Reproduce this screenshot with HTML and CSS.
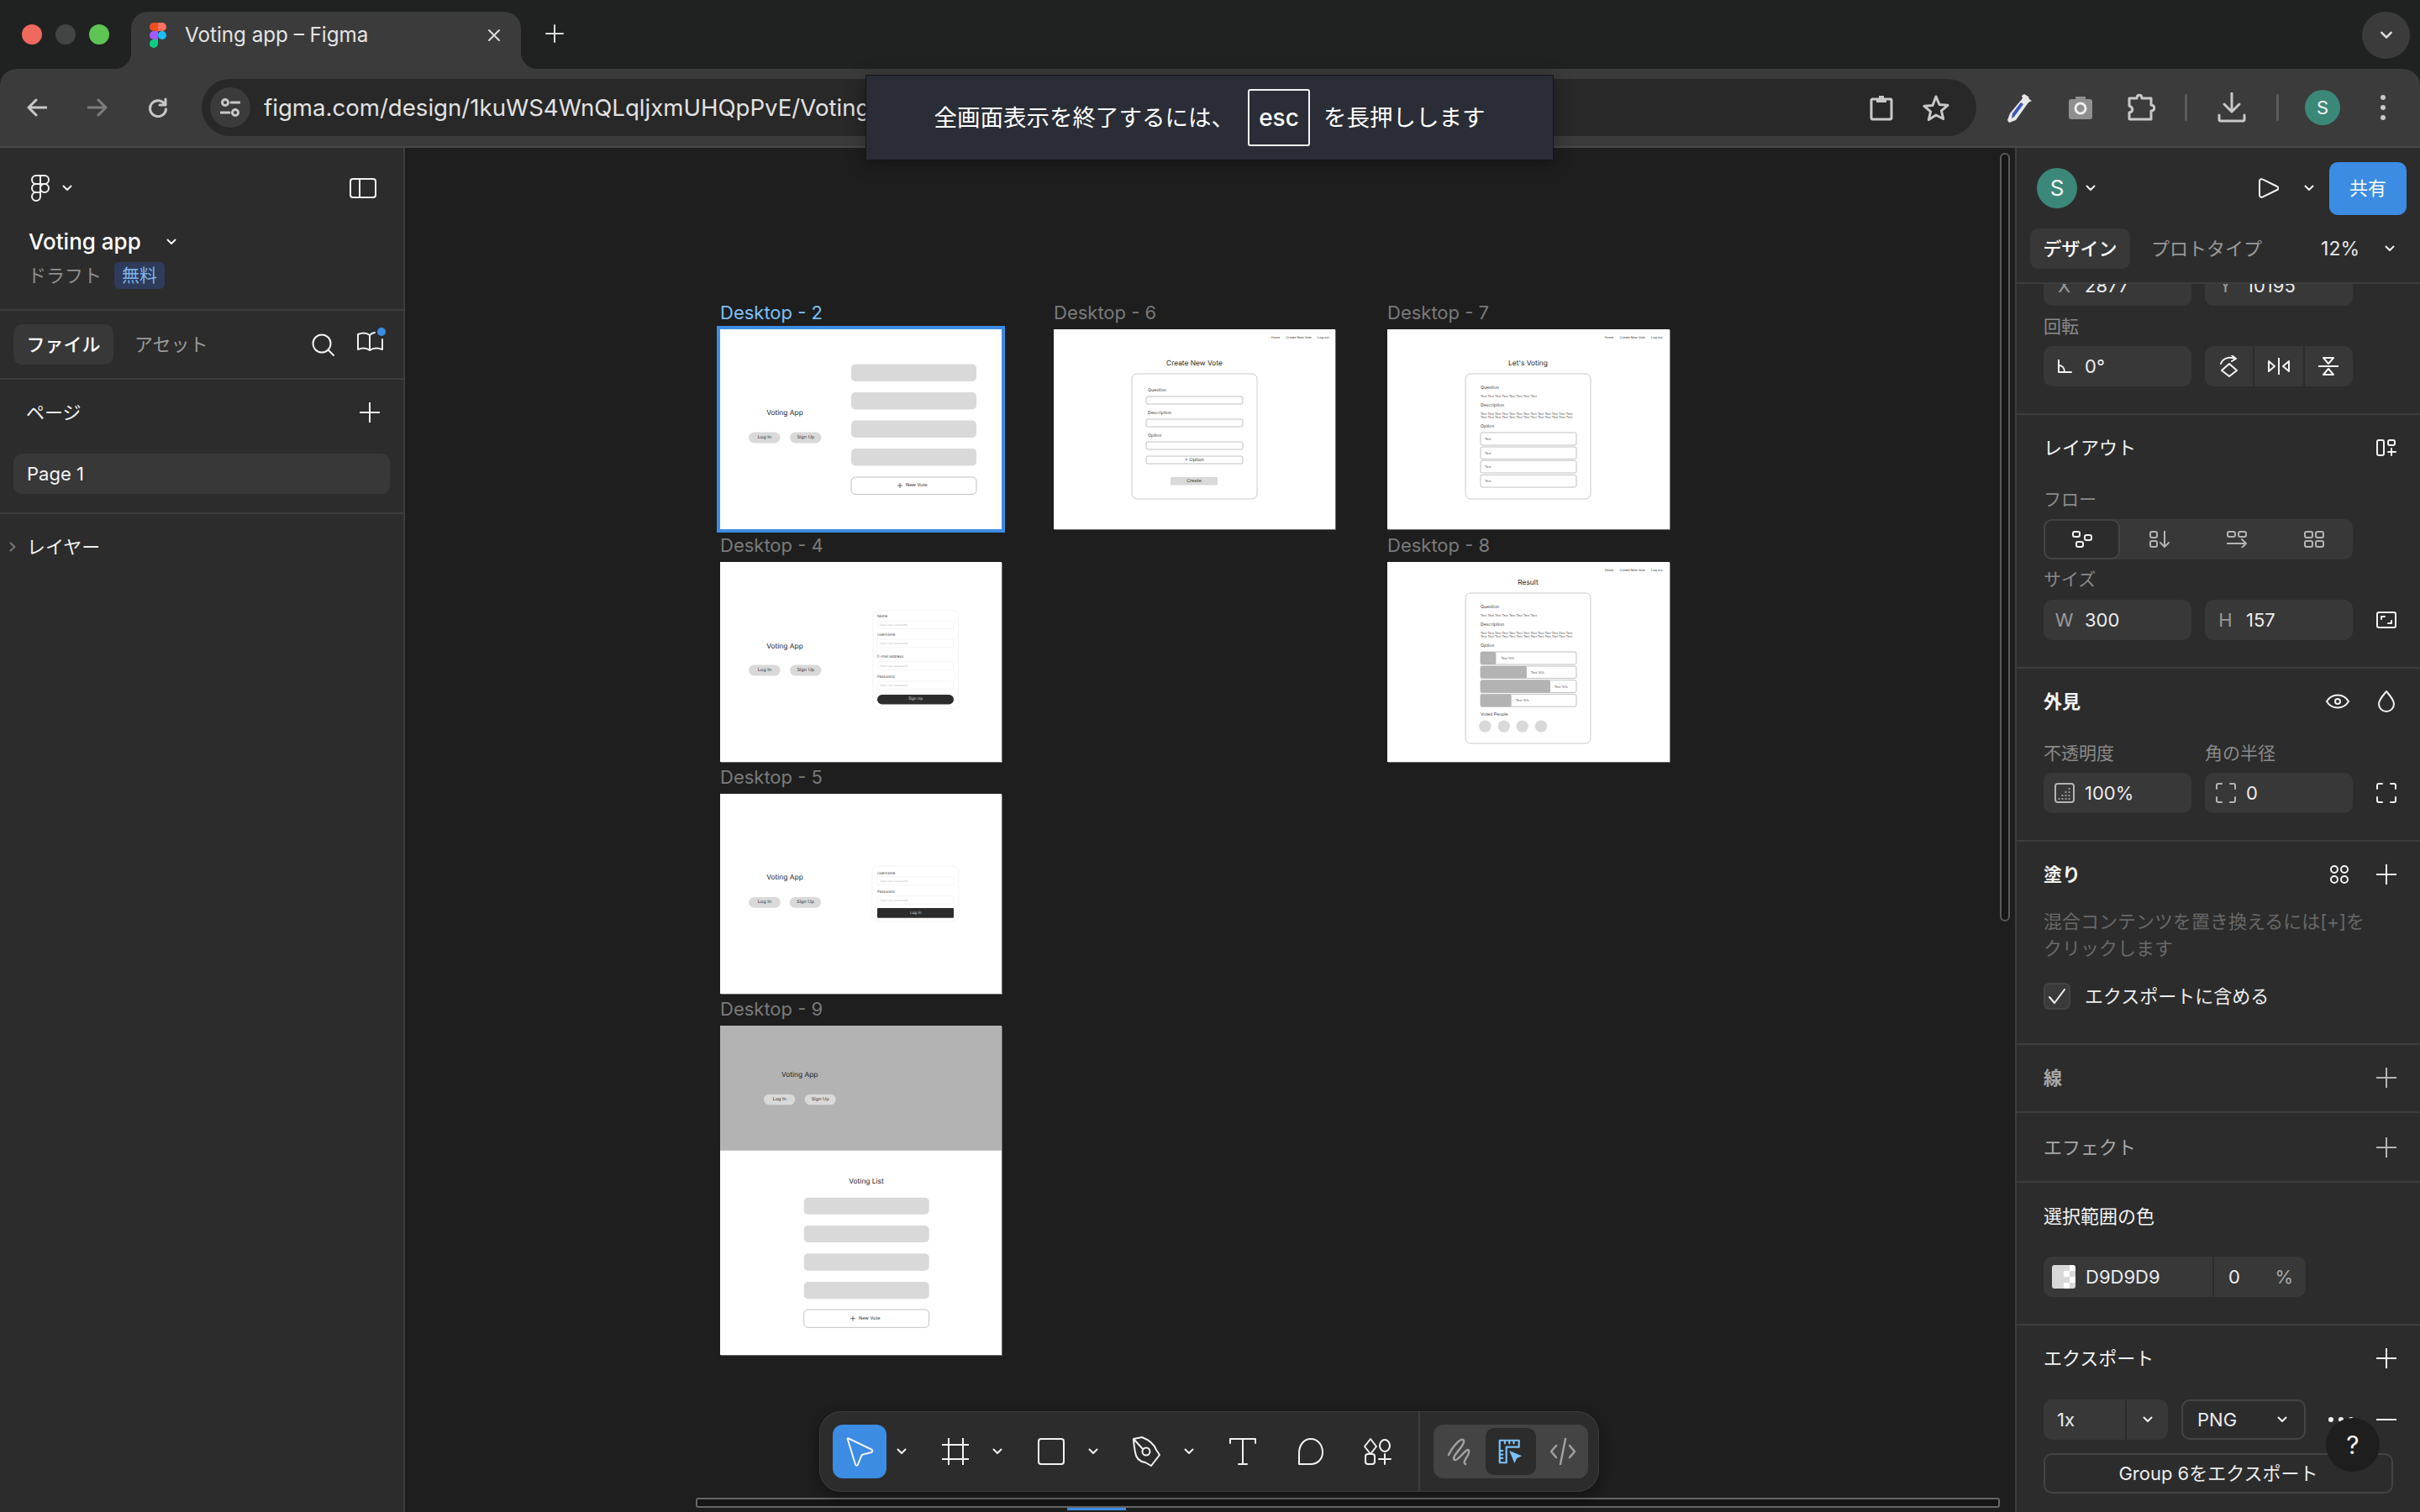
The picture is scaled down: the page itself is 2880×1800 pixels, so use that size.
FILE: index.html
```html
<!DOCTYPE html>
<html lang="ja">
<head>
<meta charset="utf-8">
<title>Voting app – Figma</title>
<link rel="stylesheet" href="styles.css">
</head>
<body>
<svg class="sprite" width="0" height="0">
  <symbol id="chev" viewBox="0 0 12 8"><path d="M1.5 1.5 6 6l4.500-4.500"/></symbol>
  <symbol id="plus" viewBox="0 0 24 24"><path d="M12 0v24M0 12h24"/></symbol>
</svg>

<header class="tabstrip">
  <div class="lights"><span class="dot dot-r"></span><span class="dot dot-g"></span><span class="dot dot-y"></span></div>
  <div class="tab">
    <svg class="logo-color" width="20" height="30" viewBox="0 0 20 30"><path fill="#f24e1e" d="M10 0H5a5 5 0 0 0 0 10h5z"/><path fill="#ff7262" d="M10 0h5a5 5 0 0 1 0 10h-5z"/><path fill="#a259ff" d="M10 10H5a5 5 0 0 0 0 10h5z"/><circle fill="#1abcfe" cx="15" cy="15" r="5"/><path fill="#0acf83" d="M5 20a5 5 0 1 0 5 5v-5z"/></svg>
    <span class="tab-title">Voting app – Figma</span>
    <svg class="i i-light" width="24" height="24" viewBox="0 0 24 24"><path d="M6 6l12 12M18 6 6 18"/></svg>
  </div>
  <svg class="i i-light newtab" width="24" height="24" viewBox="0 0 24 24"><path d="M12 2v20M2 12h20"/></svg>
  <div class="tabmenu"><svg class="i i-light" width="16" height="10"><use href="#chev"/></svg></div>
</header>

<nav class="toolbar">
  <svg class="i i-chrome" width="24" height="24" viewBox="0 0 24 24"><path d="M23 12H2M11 3l-9 9 9 9"/></svg>
  <svg class="i i-chrome-dim navbtn" width="24" height="24" viewBox="0 0 24 24"><path d="M1 12h21M13 3l9 9-9 9"/></svg>
  <svg class="i i-chrome navbtn" width="24" height="24" viewBox="0 0 24 24"><path d="M20 8a9.500 9.500 0 1 0 1.500 6M21 2v7h-7"/></svg>
  <div class="omni">
    <span class="siteinfo"><svg class="i i-chrome" width="24" height="24" viewBox="0 0 24 24"><circle cx="6" cy="6" r="3.500"/><path d="M13 6h10M1 18h10"/><circle cx="18" cy="18" r="3.500"/></svg></span>
    <span class="url">figma.com/design/1kuWS4WnQLqljxmUHQpPvE/Voting</span>
    <svg class="i i-chrome omni-ic" width="28" height="32" viewBox="0 0 28 32"><path d="M3 6h22a1.500 1.500 0 0 1 1 1v21a2 2 0 0 1-2 2H4a2 2 0 0 1-2-2V7z"/><path class="solid" d="M8 6h12v4H8zM11 2h6v4h-6z"/></svg>
    <svg class="i i-chrome omni-ic" width="32" height="32" viewBox="0 0 32 32"><path d="m16 3 4 9.500 10 .8-7.600 6.500 2.300 9.700L16 25l-8.700 5.500 2.300-9.700L2 14.300l10-.8z"/></svg>
  </div>
  <div class="actions">
    <svg class="i-cell" width="34" height="36" viewBox="0 0 34 36"><path fill="#e8e8e8" d="m23 2 5 3 1 3 3 2-4 2-15 21-8 3-2-3 3-8L21 7l-1-3z"/><path fill="#3a55b8" d="M9 25 19 12l3 2-11 15-3 2z"/></svg>
    <svg class="i-cell" width="30" height="30" viewBox="0 0 30 30"><path fill="#8f8f8f" d="M9 5V2h12v3h5a3 3 0 0 1 3 3v18a3 3 0 0 1-3 3H4a3 3 0 0 1-3-3V8a3 3 0 0 1 3-3z"/><circle cx="15" cy="16" r="6" fill="none" stroke="#eee" stroke-width="3"/></svg>
    <svg class="i i-chrome i-cell" width="34" height="34" viewBox="0 0 34 34"><path d="M3 6h9c0-5 6-5 6 0h11v8c5 0 5 7 0 7v10H4a1 1 0 0 1-1-1v-7c5-1 5-6 0-8z"/></svg>
    <span class="tdiv"></span>
    <svg class="i i-chrome i-cell" width="34" height="36" viewBox="0 0 34 36"><path d="M17 1v22M8 14l9 9 9-9M2 27v5a2 2 0 0 0 2 2h26a2 2 0 0 0 2-2v-5"/></svg>
    <span class="tdiv"></span>
    <span class="avatar avatar-sm i-cell">S</span>
    <svg class="i-cell dots" width="6" height="30" viewBox="0 0 6 30"><circle cx="3" cy="3" r="3"/><circle cx="3" cy="15" r="3"/><circle cx="3" cy="27" r="3"/></svg>
  </div>
</nav>

<main class="workspace">
  <aside class="left">
    <section class="lf-top">
      <div class="lf-brand">
        <svg class="i i-white" width="22" height="32" viewBox="0 0 22 32"><path d="M11 1H6a5 5 0 0 0 0 10h5zM11 1h5a5 5 0 0 1 0 10h-5zM11 11H6a5 5 0 0 0 0 10h5z"/><circle cx="16" cy="16" r="5"/><path d="M6 21a5 5 0 1 0 5 5v-5z"/></svg>
        <svg class="i i-white" width="12" height="8"><use href="#chev"/></svg>
        <svg class="i i-white push" width="32" height="24" viewBox="0 0 32 24"><rect x="1" y="1" width="30" height="22" rx="3"/><path d="M12 1v22"/></svg>
      </div>
      <div class="lf-name"><span>Voting app</span><svg class="i i-white" width="12" height="8"><use href="#chev"/></svg></div>
      <div class="lf-draft"><span>ドラフト</span><span class="badge">無料</span></div>
    </section>
    <section class="lf-tabs">
      <span class="pilltab on">ファイル</span>
      <span class="pilltab">アセット</span>
      <svg class="i i-white push" width="27" height="27" viewBox="0 0 27 27"><circle cx="12" cy="12" r="10.500"/><path d="m19.500 19.500 6.500 6.500"/></svg>
      <svg class="book" width="34" height="30" viewBox="0 0 34 30"><g class="i i-white"><path d="M1 8c5-2 10-2 14 1v18c-4-3-9-3-14-1zM15 9c2-2 4-3 6-3M30 14v12c-5-2-11-2-15 1"/></g><circle cx="29" cy="5" r="5" fill="#3c8ce3"/></svg>
    </section>
    <section class="lf-pages">
      <div class="lf-head"><span>ページ</span><svg class="i i-white" width="24" height="24"><use href="#plus"/></svg></div>
      <div class="page-row">Page 1</div>
    </section>
    <section class="lf-layers">
      <svg class="i i-mute" width="8" height="12" viewBox="0 0 8 12"><path d="m1.500 1.500 5 4.500-5 4.500"/></svg>
      <span>レイヤー</span>
    </section>
  </aside>

  <div class="canvas">
    <!-- Desktop 2 -->
    <div class="fr fr-c1 fr-r1">
      <div class="fr-label sel">Desktop - 2</div>
      <svg class="mini mini-sel" width="335" height="238" viewBox="0 0 335 238">
        <text class="m-title" x="77" y="100">Voting App</text>
        <rect class="m-pill" x="34" y="122.500" width="37.500" height="13" rx="6.500"/><text class="m-btn" x="52.800" y="129">Log In</text>
        <rect class="m-pill" x="83" y="122.500" width="37.500" height="13" rx="6.500"/><text class="m-btn" x="101.800" y="129">Sign Up</text>
        <rect class="m-pill" x="156" y="41.500" width="149" height="20.500" rx="5"/>
        <rect class="m-pill" x="156" y="75" width="149" height="20.500" rx="5"/>
        <rect class="m-pill" x="156" y="108.500" width="149" height="20.500" rx="5"/>
        <rect class="m-pill" x="156" y="142" width="149" height="20.500" rx="5"/>
        <rect class="m-box" x="156" y="176" width="149" height="20.500" rx="5"/>
        <path class="m-plus" d="M214 183v6M211 186h6"/><text class="m-btn m-left" x="221" y="186">New Vote</text>
      </svg>
    </div>
    <!-- Desktop 4 -->
    <div class="fr fr-c1 fr-r2">
      <div class="fr-label">Desktop - 4</div>
      <svg class="mini" width="335" height="238" viewBox="0 0 335 238">
        <text class="m-title" x="77" y="100.500">Voting App</text>
        <rect class="m-pill" x="34" y="122.500" width="37.500" height="13" rx="6.500"/><text class="m-btn" x="52.800" y="129">Log In</text>
        <rect class="m-pill" x="83" y="122.500" width="37.500" height="13" rx="6.500"/><text class="m-btn" x="101.800" y="129">Sign Up</text>
        <rect class="m-soft" x="182" y="57.500" width="101.500" height="117.500" rx="6"/>
        <text class="m-tiny" x="187" y="65.500">Name</text>
        <rect class="m-soft" x="187" y="70.500" width="91" height="9" rx="1"/><text class="m-ph" x="190" y="75">Input your username</text>
        <text class="m-tiny" x="187" y="87.800">Username</text>
        <rect class="m-soft" x="187" y="92" width="91" height="10" rx="1"/><text class="m-ph" x="190" y="97">Input your password</text>
        <text class="m-tiny" x="187" y="113.700">E-mail address</text>
        <rect class="m-soft" x="187" y="118.500" width="91" height="10" rx="4"/><text class="m-ph" x="190" y="123.500">Input your password</text>
        <text class="m-tiny" x="187" y="137">Password</text>
        <rect class="m-soft" x="187" y="142" width="91" height="10" rx="4"/><text class="m-ph" x="190" y="147">Input your password</text>
        <rect class="m-dark" x="187" y="158" width="91" height="11.500" rx="5.700"/><text class="m-onDark" x="232.500" y="163.700">Sign Up</text>
      </svg>
    </div>
    <!-- Desktop 5 -->
    <div class="fr fr-c1 fr-r3">
      <div class="fr-label">Desktop - 5</div>
      <svg class="mini" width="335" height="238" viewBox="0 0 335 238">
        <text class="m-title" x="77" y="100">Voting App</text>
        <rect class="m-pill" x="34.300" y="123" width="37.400" height="12.700" rx="6.300"/><text class="m-btn" x="52.800" y="129.300">Log In</text>
        <rect class="m-pill" x="82.700" y="123" width="37.300" height="12.700" rx="6.300"/><text class="m-btn" x="101.500" y="129.300">Sign Up</text>
        <rect class="m-soft" x="181" y="86" width="103" height="65.700" rx="6"/>
        <text class="m-tiny" x="187" y="95">Username</text>
        <rect class="m-soft" x="187" y="99" width="91" height="10" rx="1"/><text class="m-ph" x="190.500" y="104">Input your username</text>
        <text class="m-tiny" x="187" y="117">Password</text>
        <rect class="m-soft" x="187" y="121.700" width="91" height="9.500" rx="1"/><text class="m-ph" x="190.500" y="126.500">Input your password</text>
        <rect class="m-dark" x="187" y="136" width="91" height="11.700" rx="1"/><text class="m-onDark" x="232.700" y="142">Log In</text>
      </svg>
    </div>
    <!-- Desktop 9 -->
    <div class="fr fr-c1 fr-r4">
      <div class="fr-label">Desktop - 9</div>
      <svg class="mini" width="335" height="392" viewBox="0 0 335 392">
        <rect class="m-shade" x="0" y="0" width="335" height="148.700"/>
        <text class="m-title" x="94.700" y="58.700">Voting App</text>
        <rect class="m-pill" x="52" y="81.700" width="37.300" height="12.600" rx="6.300"/><text class="m-btn" x="70.700" y="88">Log In</text>
        <rect class="m-pill" x="100.700" y="81.700" width="37" height="12.600" rx="6.300"/><text class="m-btn" x="119.200" y="88">Sign Up</text>
        <text class="m-title" x="174" y="185.700">Voting List</text>
        <rect class="m-pill" x="99.700" y="204.700" width="149" height="20" rx="5"/>
        <rect class="m-pill" x="99.700" y="238" width="149" height="20" rx="5"/>
        <rect class="m-pill" x="99.700" y="271.300" width="149" height="20.400" rx="5"/>
        <rect class="m-pill" x="99.700" y="305" width="149" height="20.300" rx="5"/>
        <rect class="m-box" x="99.700" y="338" width="149" height="21.300" rx="5"/>
        <path class="m-plus" d="M158 345.700v6M155 348.700h6"/><text class="m-btn m-left" x="165" y="348.700">New Vote</text>
      </svg>
    </div>
    <!-- Desktop 6 -->
    <div class="fr fr-c2 fr-r1">
      <div class="fr-label">Desktop - 6</div>
      <svg class="mini" width="335" height="238" viewBox="0 0 335 238">
        <text class="m-nav" x="258.700" y="9">Home</text><text class="m-nav" x="276.500" y="9">Create New Vote</text><text class="m-nav" x="314" y="9">Log out</text>
        <text class="m-title" x="167.500" y="40.700">Create New Vote</text>
        <rect class="m-card" x="93" y="53" width="149" height="149" rx="6"/>
        <text class="m-lbl" x="112" y="72.600">Question</text>
        <rect class="m-box" x="110" y="80" width="115" height="9" rx="2"/>
        <text class="m-lbl" x="112" y="100">Description</text>
        <rect class="m-box" x="110" y="107" width="115" height="9" rx="2"/>
        <text class="m-lbl" x="112" y="127">Option</text>
        <rect class="m-box" x="110" y="134" width="115" height="9" rx="2"/>
        <rect class="m-box" x="110" y="151" width="115" height="9" rx="2"/>
        <text class="m-btn" x="167.500" y="155.500">+ Option</text>
        <rect class="m-pill" x="139" y="176" width="56" height="9.500" rx="1"/>
        <text class="m-btn" x="167" y="180.700">Create</text>
      </svg>
    </div>
    <!-- Desktop 7 -->
    <div class="fr fr-c3 fr-r1">
      <div class="fr-label">Desktop - 7</div>
      <svg class="mini" width="336" height="238" viewBox="0 0 336 238">
        <text class="m-nav" x="258.700" y="9">Home</text><text class="m-nav" x="276.500" y="9">Create New Vote</text><text class="m-nav" x="314" y="9">Log out</text>
        <text class="m-title" x="167.500" y="40.700">Let's Voting</text>
        <rect class="m-card" x="93" y="53" width="149" height="149" rx="6"/>
        <text class="m-lbl" x="111" y="70.400">Question</text>
        <text class="m-txt" x="111" y="79.600">Text Text Text Text Text Text Text Text</text>
        <text class="m-lbl" x="111" y="91">Description</text>
        <text class="m-txt" x="111" y="100">Text Text Text Text Text Text Text Text Text Text Text Text Text</text>
        <text class="m-txt" x="111" y="104.400">Text Text Text Text Text Text Text Text Text Text Text Text Text</text>
        <text class="m-lbl" x="111" y="116">Option</text>
        <rect class="m-box" x="111" y="123" width="114" height="15" rx="2"/><text class="m-txt" x="116" y="130.500">Text</text>
        <rect class="m-box" x="111" y="140" width="114" height="14.500" rx="2"/><text class="m-txt" x="116" y="147.500">Text</text>
        <rect class="m-box" x="111" y="156.300" width="114" height="14.700" rx="2"/><text class="m-txt" x="116" y="163.700">Text</text>
        <rect class="m-box" x="111" y="173.300" width="114" height="14.700" rx="2"/><text class="m-txt" x="116" y="180.500">Text</text>
      </svg>
    </div>
    <!-- Desktop 8 -->
    <div class="fr fr-c3 fr-r2">
      <div class="fr-label">Desktop - 8</div>
      <svg class="mini" width="336" height="238" viewBox="0 0 336 238">
        <text class="m-nav" x="258.700" y="9.600">Home</text><text class="m-nav" x="276.500" y="9.600">Create New Vote</text><text class="m-nav" x="314" y="9.600">Log out</text>
        <text class="m-title" x="167.500" y="25">Result</text>
        <rect class="m-card" x="93" y="37" width="149" height="179" rx="6"/>
        <text class="m-lbl" x="111" y="54.400">Question</text>
        <text class="m-txt" x="111" y="63.700">Text Text Text Text Text Text Text Text</text>
        <text class="m-lbl" x="111" y="75">Description</text>
        <text class="m-txt" x="111" y="84">Text Text Text Text Text Text Text Text Text Text Text Text Text</text>
        <text class="m-txt" x="111" y="88.500">Text Text Text Text Text Text Text Text Text Text Text Text Text</text>
        <text class="m-lbl" x="111" y="100">Option</text>
        <rect class="m-bar" x="111" y="107" width="18.400" height="15" rx="2"/><rect class="m-box" x="111" y="107" width="114" height="15" rx="2"/><text class="m-txt" x="135.500" y="114.500">Text 16%</text>
        <rect class="m-bar" x="111" y="124" width="55" height="14.500" rx="2"/><rect class="m-box" x="111" y="124" width="114" height="14.500" rx="2"/><text class="m-txt" x="171" y="131.300">Text 16%</text>
        <rect class="m-bar" x="111" y="140.700" width="83" height="14.800" rx="2"/><rect class="m-box" x="111" y="140.700" width="114" height="14.800" rx="2"/><text class="m-txt" x="199" y="148">Text 16%</text>
        <rect class="m-bar" x="111" y="157.400" width="36.700" height="14.800" rx="2"/><rect class="m-box" x="111" y="157.400" width="114" height="14.800" rx="2"/><text class="m-txt" x="153" y="164.800">Text 16%</text>
        <text class="m-lbl" x="111" y="181.500">Voted People</text>
        <circle class="m-pill" cx="116.300" cy="195.600" r="7.200"/><circle class="m-pill" cx="138.800" cy="195.600" r="7.200"/><circle class="m-pill" cx="160.700" cy="195.600" r="7.200"/><circle class="m-pill" cx="183" cy="195.600" r="7.200"/>
      </svg>
    </div>

    <div class="vscroll"></div>
    <div class="hscroll"></div>
    <div class="hmark"></div>

    <div class="dock">
      <span class="tool tool-on"><svg class="i i-white" width="36" height="36" viewBox="0 0 36 36"><path d="M4 4c-1-1-.5-2 1-1.500l27 13c2 1 1.500 3 0 3.500l-10 2.500c-1 .3-1.500 1-2 2l-4 10c-.5 1.500-2.500 1.500-3 0z"/></svg></span>
      <span class="tool-ch"><svg class="i i-white" width="12" height="8"><use href="#chev"/></svg></span>
      <span class="tool"><svg class="i i-white" width="32" height="32" viewBox="0 0 32 32"><path d="M8 0v32M25 0v32M0 8h32M0 25h32"/></svg></span>
      <span class="tool-ch"><svg class="i i-white" width="12" height="8"><use href="#chev"/></svg></span>
      <span class="tool"><svg class="i i-white" width="32" height="32" viewBox="0 0 32 32"><rect x="1" y="1" width="30" height="30" rx="3"/></svg></span>
      <span class="tool-ch"><svg class="i i-white" width="12" height="8"><use href="#chev"/></svg></span>
      <span class="tool"><svg class="i i-white" width="36" height="36" viewBox="0 0 36 36"><path d="M2 3l10-2c8 3 14 7 17 15l4 6-10 13-7-4C9 30 5 26 4 19 3 13 2 8 2 3zM2 3l11 12"/><circle cx="17" cy="18" r="4.500"/></svg></span>
      <span class="tool-ch"><svg class="i i-white" width="12" height="8"><use href="#chev"/></svg></span>
      <span class="tool"><svg class="i i-white" width="32" height="32" viewBox="0 0 32 32"><path d="M1 6V1h30v5M16 1v30M11 31h10"/></svg></span>
      <span class="tool tool-gap3"><svg class="i i-white" width="30" height="32" viewBox="0 0 30 32"><path d="M1 31V18C1 8 7 1 15 1s14 7 14 16c0 8-6 14-14 14z"/></svg></span>
      <span class="tool tool-gap1"><svg class="i i-white" width="34" height="32" viewBox="0 0 34 32"><path d="M9 1l7 9-7 9-7-9z"/><ellipse cx="26" cy="9" rx="6" ry="7"/><rect x="3" y="19" width="11" height="12" rx="3"/><path d="M26 19v12M19 25h14"/></svg></span>
      <span class="dock-div"></span>
      <div class="modes">
        <span class="mode"><svg class="i i-dim" width="28" height="36" viewBox="0 0 28 36"><path d="M2 22C8 10 18 0 20 5c2 6-16 19-11 23 4 2 15-16 17-11 2 5-9 13-4 16"/></svg></span>
        <span class="mode mode-on"><svg width="30" height="30" viewBox="0 0 34 34"><path class="i i-blue ruler" d="M2 2h26v9H11v21H2zM9 2v4M15 2v4M21 2v4M2 16h4M2 21h4M2 26h4"/><path fill="#7cc0f8" d="M15 16l17 7-7 3-3 7z"/></svg></span>
        <span class="mode"><svg class="i i-dim" width="30" height="32" viewBox="0 0 30 32"><path d="M7 9 1 16l6 7M23 9l6 7-6 7M18 1l-6 30"/></svg></span>
      </div>
    </div>
  </div>

  <aside class="right">
    <header class="rt-head">
      <div class="rt-top">
        <span class="avatar avatar-lg">S</span>
        <svg class="i i-white" width="12" height="8"><use href="#chev"/></svg>
        <svg class="i i-white push" width="24" height="24" viewBox="0 0 24 24"><path d="M1 4c0-2.500 2-3.500 4-2.300L22 10c2 1.300 2 3 0 4L5 22.300C3 23.500 1 22.500 1 20z"/></svg>
        <svg class="i i-white play-ch" width="12" height="8"><use href="#chev"/></svg>
        <span class="share">共有</span>
      </div>
      <div class="rt-tabs">
        <span class="pilltab on">デザイン</span>
        <span class="pilltab">プロトタイプ</span>
        <span class="zoomval">12%</span>
        <svg class="i i-white" width="12" height="8"><use href="#chev"/></svg>
      </div>
    </header>
    <section class="sec sec-pos">
      <div class="frow frow-clip">
        <div class="field"><span class="pre">X</span><span>2877</span></div>
        <div class="field"><span class="pre">Y</span><span>10195</span></div>
      </div>
      <div class="cap cap-a">回転</div>
      <div class="frow">
        <div class="field"><span class="pre"><svg class="i i-white" width="18" height="16" viewBox="0 0 18 16"><path d="M2 0v15h15M2 7c4 0 7 3 7 8"/></svg></span><span>0°</span></div>
        <div class="btn3">
          <span><svg class="i i-white" width="22" height="26" viewBox="0 0 22 26"><path d="M11 10l9 8-9 7-9-7zM1 10C3 4 10 1 18 4M14 0l5 4-5 3"/></svg></span>
          <span><svg class="i i-white" width="26" height="20" viewBox="0 0 26 20"><path d="M13 0v20M1 4l7 6-7 6zM25 4l-7 6 7 6z"/></svg></span>
          <span><svg class="i i-white" width="24" height="22" viewBox="0 0 24 22"><path d="M0 11h24M6 1h12l-6 7zM6 21h12l-6-7z"/></svg></span>
        </div>
      </div>
    </section>
    <section class="sec sec-layout">
      <div class="sec-head"><span>レイアウト</span><svg class="i i-white" width="24" height="20" viewBox="0 0 24 20"><rect x="1" y="1" width="8" height="18" rx="2"/><rect x="14" y="1" width="8" height="6" rx="2"/><path d="M18 11v8M14 15h9"/></svg></div>
      <div class="cap cap-b">フロー</div>
      <div class="seg">
        <span class="seg-item on"><svg class="i i-white" width="24" height="20" viewBox="0 0 24 20"><rect x="1" y="1" width="8" height="6" rx="2"/><rect x="15" y="5" width="8" height="6" rx="2"/><rect x="5" y="13" width="8" height="6" rx="2"/></svg></span>
        <span class="seg-item"><svg class="i i-soft" width="24" height="20" viewBox="0 0 24 20"><rect x="1" y="1" width="8" height="7" rx="2"/><rect x="1" y="12" width="8" height="7" rx="2"/><path d="M18 0v19M13 14l5 5 5-5"/></svg></span>
        <span class="seg-item"><svg class="i i-soft" width="24" height="20" viewBox="0 0 24 20"><rect x="1" y="1" width="9" height="6" rx="2"/><rect x="14" y="1" width="9" height="6" rx="2"/><path d="M0 15h23M18 10l5 5-5 5"/></svg></span>
        <span class="seg-item"><svg class="i i-soft" width="24" height="20" viewBox="0 0 24 20"><rect x="1" y="1" width="9" height="7" rx="2"/><rect x="14" y="1" width="9" height="7" rx="2"/><rect x="1" y="12" width="9" height="7" rx="2"/><rect x="14" y="12" width="9" height="7" rx="2"/></svg></span>
      </div>
      <div class="cap cap-c">サイズ</div>
      <div class="frow">
        <div class="field"><span class="pre">W</span><span>300</span></div>
        <div class="field"><span class="pre">H</span><span>157</span></div>
        <svg class="i i-white push" width="24" height="20" viewBox="0 0 24 20"><rect x="1" y="1" width="22" height="18" rx="2"/><path d="M6 9V6h4M18 11v3h-4"/></svg>
      </div>
    </section>
    <section class="sec sec-look">
      <div class="sec-head"><span class="strong">外見</span>
        <span class="head-ics">
          <svg class="i i-white" width="28" height="18" viewBox="0 0 28 18"><path d="M1 9c6-10 20-10 26 0-6 10-20 10-26 0z"/><circle cx="14" cy="9" r="3"/></svg>
          <svg class="i i-white" width="24" height="26" viewBox="-1 0 24 26"><path d="M11 1c4 5 9 10 9 15a9 9 0 0 1-18 0C2 11 7 6 11 1z"/></svg>
        </span>
      </div>
      <div class="caps2 cap-b"><span class="cap">不透明度</span><span class="cap">角の半径</span></div>
      <div class="frow frow-b">
        <div class="field"><span class="pre"><svg class="i i-soft" width="24" height="24" viewBox="0 0 24 24"><rect x="1" y="1" width="22" height="22" rx="3"/><path class="dotty" d="M5 19h1M9 19h1M13 19h1M17 19h1M9 15h1M13 15h1M17 15h1M13 11h1M17 11h1M17 7h1"/></svg></span><span>100%</span></div>
        <div class="field"><span class="pre"><svg class="i i-soft" width="24" height="24" viewBox="0 0 24 24"><path d="M1 7V3a2 2 0 0 1 2-2h4M17 1h4a2 2 0 0 1 2 2v4M23 17v4a2 2 0 0 1-2 2h-4M7 23H3a2 2 0 0 1-2-2v-4"/></svg></span><span>0</span></div>
        <svg class="i i-white push" width="24" height="24" viewBox="0 0 24 24"><path d="M1 7V3a2 2 0 0 1 2-2h4M17 1h4a2 2 0 0 1 2 2v4M23 17v4a2 2 0 0 1-2 2h-4M7 23H3a2 2 0 0 1-2-2v-4"/></svg>
      </div>
    </section>
    <section class="sec sec-fill">
      <div class="sec-head"><span class="strong">塗り</span>
        <span class="head-ics">
          <svg class="i i-white" width="24" height="24" viewBox="0 0 24 24"><circle cx="6" cy="6" r="4"/><circle cx="18" cy="6" r="4"/><circle cx="6" cy="18" r="4"/><circle cx="18" cy="18" r="4"/></svg>
          <svg class="i i-white" width="24" height="24"><use href="#plus"/></svg>
        </span>
      </div>
      <p class="hint">混合コンテンツを置き換えるには[+]を<br>クリックします</p>
      <div class="check"><span class="box"><svg class="i i-white" width="20" height="18" viewBox="0 0 20 18"><path d="m1 10 6 7L19 1"/></svg></span><span>エクスポートに含める</span></div>
    </section>
    <section class="sec sec-stroke">
      <div class="sec-head off"><span class="strong">線</span><svg class="i i-soft" width="24" height="24"><use href="#plus"/></svg></div>
    </section>
    <section class="sec sec-fx">
      <div class="sec-head off"><span>エフェクト</span><svg class="i i-soft" width="24" height="24"><use href="#plus"/></svg></div>
    </section>
    <section class="sec sec-colors">
      <div class="sec-head"><span>選択範囲の色</span></div>
      <div class="colorf">
        <span class="cf-left"><span class="swatch"></span><span>D9D9D9</span></span>
        <span class="cf-right"><span>0</span><span class="pct">%</span></span>
      </div>
    </section>
    <section class="sec sec-export">
      <div class="sec-head"><span>エクスポート</span><svg class="i i-white" width="24" height="24"><use href="#plus"/></svg></div>
      <div class="exp-row">
        <span class="combo"><span class="combo-v">1x</span><span class="combo-c"><svg class="i i-white" width="12" height="8"><use href="#chev"/></svg></span></span>
        <span class="select"><span>PNG</span><svg class="i i-white" width="12" height="8"><use href="#chev"/></svg></span>
        <svg class="more" width="30" height="6" viewBox="0 0 30 6"><circle cx="3" cy="3" r="3"/><circle cx="15" cy="3" r="3"/><circle cx="27" cy="3" r="3"/></svg>
        <svg class="i i-white push" width="24" height="4" viewBox="0 0 24 4"><path d="M0 2h24"/></svg>
      </div>
      <div class="exp-btn">Group 6をエクスポート</div>
    </section>
    <div class="help">?</div>
  </aside>
</main>

<div class="toast">
  <span>全画面表示を終了するには、</span>
  <span class="esc">esc</span>
  <span>を長押しします</span>
</div>
</body>
</html>
```
FILE: styles.css
```css
* { box-sizing: border-box; }
html, body { margin: 0; height: 100%; }
body {
  width: 2880px; height: 1800px; overflow: hidden; position: relative;
  display: flex; flex-direction: column;
  background: #202221; color: #f0f0f0;
  font: 400 22px/32px Inter, "Noto Sans CJK JP", sans-serif;
}
.sprite { position: absolute; }
.i { fill: none; stroke: currentColor; stroke-width: 2; stroke-linecap: round; stroke-linejoin: round; flex: none; }
.i use { fill: none; }
.i-white { color: #f2f2f2; }
.i-light { color: #dcdcdc; }
.i-chrome { color: #c8c8c8; stroke-width: 3; }
.i-chrome-dim { color: #7d7d7d; stroke-width: 3; }
.i-mute { color: #777; }
.i-soft { color: #b4b4b4; }
.i-dim { color: #a0a0a0; stroke-width: 2.5; }
.i-blue { color: #7cc0f8; }
.ruler { stroke-width: 2.5; }
.solid { fill: currentColor; stroke: none; }
.dotty { stroke-width: 1.5; }
.push { margin-left: auto; }

/* browser chrome */
.tabstrip { height: 82px; flex: none; display: flex; align-items: flex-start; padding-top: 14px; }
.lights { display: flex; gap: 16px; margin: 15px 26px 0 26px; }
.dot { width: 24px; height: 24px; border-radius: 50%; }
.dot-r { background: #f0695e; }
.dot-g { background: #434545; }
.dot-y { background: #5fc454; }
.tab {
  width: 464px; height: 68px; background: #3b3b3b; border-radius: 20px 20px 0 0;
  display: flex; align-items: center; padding: 0 20px 12px 22px; position: relative;
}
.tab::before, .tab::after { content: ""; position: absolute; bottom: 0; width: 20px; height: 20px; }
.tab::before { left: -20px; background: radial-gradient(circle at 0 0, transparent 20px, #3b3b3b 20.5px); }
.tab::after { right: -20px; background: radial-gradient(circle at 100% 0, transparent 20px, #3b3b3b 20.5px); }
.tab-title { flex: 1; margin-left: 22px; font-size: 24.2px; color: #e4e4e4; }
.newtab { margin: 14px 0 0 28px; }
.tabmenu {
  margin: 0 12px 0 auto; width: 57px; height: 56px; border-radius: 28px; background: #3b3b3b;
  display: flex; align-items: center; justify-content: center;
}
.toolbar {
  height: 94px; flex: none; background: #3b3b3b; border-bottom: 2px solid #484848;
  border-radius: 20px 20px 0 0; display: flex; align-items: center; padding-left: 32px;
}
.navbtn { margin-left: 48px; }
.omni {
  width: 2112px; height: 68px; margin-left: 40px; border-radius: 34px; background: #282828;
  display: flex; align-items: center; padding: 0 32px 0 10px; flex: none;
}
.siteinfo {
  width: 48px; height: 48px; border-radius: 50%; background: #3b3b3b; flex: none;
  display: flex; align-items: center; justify-content: center;
}
.url { flex: 1; margin-left: 16px; font-size: 27.6px; color: #e2e2e2; white-space: nowrap; overflow: hidden; }
.omni-ic { margin-left: 35px; }
.actions {
  display: grid; grid-template-columns: 102px 44px 100px 6px 103px 6px 102px 42px;
  align-items: center; justify-items: center; height: 92px;
}
.tdiv { width: 3px; height: 32px; background: #5c5c5c; border-radius: 2px; }
.avatar {
  border-radius: 50%; background: #3c8878; color: #f4f4f4;
  display: flex; align-items: center; justify-content: center; flex: none;
}
.avatar-sm { width: 42px; height: 42px; font-size: 22px; }
.avatar-lg { width: 48px; height: 48px; font-size: 26px; }
.dots { fill: #c8c8c8; }

/* workspace */
.workspace { flex: 1; display: flex; min-height: 0; background: #1e1e1e; }
.left { width: 482px; flex: none; background: #2c2c2c; border-right: 2px solid #3d3d3d; }
.lf-top { height: 194px; padding: 32px 32px 0 33px; border-bottom: 2px solid #3d3d3d; }
.lf-brand { display: flex; align-items: center; gap: 15px; height: 32px; padding-left: 4px; }
.lf-name { display: flex; align-items: center; gap: 30px; height: 36px; margin-top: 30px; padding-left: 1px; font-size: 26px; font-weight: 500; color: #fff; }
.lf-draft { display: flex; align-items: center; height: 32px; margin-top: 6px; color: #8f8f8f; }
.badge {
  margin-left: 15px; width: 60px; height: 32px; border-radius: 6px; background: #2f3b5a; color: #7cb4ec;
  display: flex; align-items: center; justify-content: center; font-size: 21px;
}
.lf-tabs { height: 82px; padding: 16px 21px 0 16px; border-bottom: 2px solid #3d3d3d; display: flex; align-items: flex-start; }
.lf-tabs > svg { margin-top: 11px; }
.lf-tabs .book { margin-left: 27px; margin-top: 4px; }
.pilltab { height: 48px; padding: 0 17px; border-radius: 10px; display: flex; align-items: center; color: #9a9a9a; }
.pilltab + .pilltab { margin-left: 8px; }
.pilltab.on { width: 119px; padding: 0; justify-content: center; background: #383838; color: #fff; font-weight: 500; }
.lf-pages { height: 160px; padding-top: 23px; border-bottom: 2px solid #3d3d3d; }
.lf-head { display: flex; align-items: center; justify-content: space-between; height: 32px; padding: 0 28px 0 31px; }
.page-row {
  margin: 33px 16px 0; width: 448px; height: 48px; padding-left: 16px; border-radius: 10px; background: #383838;
  display: flex; align-items: center; color: #f4f4f4;
}
.lf-layers { display: flex; align-items: center; gap: 13px; height: 32px; margin-top: 23px; padding-left: 11px; }

/* canvas */
.canvas { flex: 1; position: relative; overflow: hidden; background: #1e1e1e; }
.fr { position: absolute; }
.fr-c1 { left: 375px; }
.fr-c2 { left: 772px; }
.fr-c3 { left: 1169px; }
.fr-r1 { top: 186px; }
.fr-r2 { top: 463px; }
.fr-r3 { top: 739px; }
.fr-r4 { top: 1015px; }
.fr-label { height: 30px; line-height: 20px; font-size: 22px; color: #7a7a7a; white-space: nowrap; }
.fr-label.sel { color: #7cc0f8; }
.mini { display: block; background: #fff; box-shadow: 1px 1px 0 #6a6a6a; font-family: Inter, sans-serif; }
.mini-sel { outline: 4px solid #3c8ce3; }
.mini text { dominant-baseline: central; text-rendering: geometricPrecision; }
.m-title { font-size: 8.4px; fill: #1e1e1e; text-anchor: middle; }
.m-btn { font-size: 5.6px; fill: #333; text-anchor: middle; }
.m-left { text-anchor: start; }
.m-nav { font-size: 3.8px; fill: #333; }
.m-lbl { font-size: 5.2px; fill: #333; }
.m-txt { font-size: 3.7px; fill: #555; }
.m-tiny { font-size: 4.4px; fill: #555; }
.m-ph { font-size: 3.4px; fill: #bdbdbd; }
.m-onDark { font-size: 4.6px; fill: #ddd; text-anchor: middle; }
.m-pill { fill: #d9d9d9; }
.m-shade { fill: #b3b3b3; }
.m-box { fill: none; stroke: #a8a8a8; stroke-width: .7; }
.m-card { fill: #fff; stroke: #b4b4b4; stroke-width: .7; }
.m-soft { fill: #fff; stroke: #efefef; stroke-width: .7; }
.m-dark { fill: #2c2c2c; }
.m-bar { fill: #b3b3b3; }
.m-plus { fill: none; stroke: #333; stroke-width: .7; }

.vscroll {
  position: absolute; left: 1898px; top: 6px; width: 12px; height: 915px;
  border: 2px solid #5a5a5a; border-radius: 6px; background: #161616;
}
.hscroll {
  position: absolute; left: 346px; top: 1607px; width: 1552px; height: 12px;
  border: 2px solid #666; border-left-color: #666; border-radius: 3px; background: #151515;
}
.hmark { position: absolute; left: 788px; top: 1619px; width: 70px; height: 3px; background: #3c8ce3; }

.dock {
  position: absolute; left: 493px; top: 1504px; width: 928px; height: 96px; border-radius: 26px;
  background: #2c2c2c; box-shadow: inset 0 0 0 1px #3d3d3d, 0 4px 14px rgba(0,0,0,.4);
  display: flex; align-items: center; padding-left: 16px; gap: 14px;
}
.tool { width: 64px; height: 64px; border-radius: 12px; display: flex; align-items: center; justify-content: center; flex: none; }
.tool-on { background: #3c8ce3; }
.tool-gap3 { margin-left: 3px; }
.tool-gap1 { margin-left: 1px; }
.tool-ch { width: 36px; display: flex; justify-content: center; margin-left: -14px; flex: none; }
.dock-div { width: 2px; height: 96px; background: #3d3d3d; margin-left: 3px; flex: none; }
.modes { margin-left: 2px; width: 184px; height: 64px; border-radius: 12px; background: #444; display: flex; align-items: center; flex: none; }
.mode { width: 60px; height: 56px; display: flex; align-items: center; justify-content: center; }
.mode-on { background: #2c2c2c; border-radius: 10px; margin: 0 2px; }

/* right panel */
.right { width: 482px; flex: none; background: #2c2c2c; border-left: 2px solid #3d3d3d; position: relative; overflow: hidden; }
.rt-head { height: 162px; padding-top: 16px; border-bottom: 2px solid #3d3d3d; position: relative; z-index: 1; background: #2c2c2c; }
.rt-top { display: flex; align-items: center; height: 64px; padding: 0 16px 0 24px; gap: 10px; }
.play-ch { margin-left: 20px; }
.share {
  margin-left: 8px; width: 92px; height: 63px; border-radius: 10px; background: #3c8ce3; color: #fff;
  display: flex; align-items: center; justify-content: center;
}
.rt-tabs { display: flex; align-items: center; height: 48px; margin-top: 16px; padding: 0 30px 0 16px; }
.zoomval { margin-left: auto; margin-right: 30px; font-size: 23px; color: #e8e8e8; }
.sec { padding: 23px 28px 0 32px; border-bottom: 2px solid #3d3d3d; overflow: hidden; }
.sec-pos { height: 156px; padding-top: 0; }
.sec-layout { height: 302px; }
.sec-look { height: 206px; }
.sec-fill { height: 242px; }
.sec-stroke { height: 81px; }
.sec-fx { height: 83px; padding-top: 25px; }
.sec-colors { height: 170px; padding-top: 24px; }
.sec-export { height: 222px; border-bottom: 0; }
.sec-head { display: flex; align-items: center; justify-content: space-between; height: 32px; color: #f4f4f4; }
.sec-head.off { color: #a8a8a8; }
.strong { font-weight: 700; }
.head-ics { display: flex; align-items: center; gap: 32px; }
.cap { color: #8a8a8a; font-size: 21px; }
.cap-a { margin: 9px 0 7px; height: 32px; }
.cap-b { margin-top: 30px; height: 32px; }
.cap-c { margin: 8px 0; height: 32px; }
.caps2 { display: flex; gap: 16px; }
.caps2 .cap { width: 176px; }
.frow { display: flex; align-items: center; gap: 16px; }
.frow-clip { margin-top: -22px; }
.frow-b { margin-top: 7px; }
.field { width: 176px; height: 48px; background: #383838; border-radius: 10px; display: flex; align-items: center; color: #ececec; flex: none; }
.pre { width: 49px; flex: none; color: #9a9a9a; display: flex; justify-content: center; align-items: center; }
.btn3 { width: 176px; height: 48px; display: flex; gap: 2px; flex: none; }
.btn3 span { flex: 1; background: #383838; display: flex; align-items: center; justify-content: center; }
.btn3 span:first-child { border-radius: 10px 0 0 10px; }
.btn3 span:last-child { border-radius: 0 10px 10px 0; }
.seg { width: 368px; height: 48px; margin-top: 7px; background: #383838; border-radius: 10px; display: flex; }
.seg-item { flex: 1; display: flex; align-items: center; justify-content: center; }
.seg-item.on { background: #2c2c2c; border: 2px solid #444; border-radius: 10px; flex: none; width: 91px; margin-right: 1px; }
.hint { margin: 24px 0 0; color: #686868; }
.check { display: flex; align-items: center; height: 32px; margin-top: 25px; color: #ececec; }
.box { width: 32px; height: 32px; border-radius: 7px; background: #3a3a3a; border: 2px solid #444; display: flex; align-items: center; justify-content: center; margin-right: 17px; }
.colorf { width: 312px; height: 48px; margin-top: 32px; background: #383838; border-radius: 10px; display: flex; color: #ececec; }
.cf-left { width: 203px; display: flex; align-items: center; padding-left: 10px; gap: 12px; border-right: 2px solid #2c2c2c; }
.cf-right { flex: 1; display: flex; align-items: center; justify-content: space-between; padding: 0 15px 0 17px; }
.pct { color: #a8a8a8; }
.swatch {
  width: 28px; height: 28px; border-radius: 3px; flex: none;
  background:
    linear-gradient(90deg, #d9d9d9 50%, transparent 50%),
    conic-gradient(#fff 25%, #d9d9d9 0 50%, #fff 0 75%, #d9d9d9 0) 0 0 / 14px 14px;
}
.exp-row { display: flex; align-items: center; height: 48px; margin-top: 33px; color: #ececec; }
.combo { width: 148px; height: 48px; background: #383838; border-radius: 10px; display: flex; flex: none; }
.combo-v { width: 99px; padding-left: 16px; display: flex; align-items: center; border-right: 2px solid #2c2c2c; }
.combo-c { flex: 1; display: flex; align-items: center; justify-content: center; }
.select { margin-left: 16px; width: 148px; height: 48px; border: 2px solid #444; border-radius: 10px; display: flex; align-items: center; justify-content: space-between; padding: 0 20px 0 17px; flex: none; }
.more { margin-left: 27px; fill: #f2f2f2; flex: none; }
.exp-btn {
  width: 416px; height: 48px; margin-top: 16px; border: 2px solid #444; border-radius: 10px; color: #ececec;
  display: flex; align-items: center; justify-content: center;
}
.help {
  position: absolute; left: 368px; top: 1512px; width: 64px; height: 64px; border-radius: 50%; background: #1e1e1e;
  color: #f2f2f2; font-size: 30px; display: flex; align-items: center; justify-content: center; z-index: 2;
}

/* fullscreen toast */
.toast {
  position: absolute; left: 1030px; top: 89px; width: 819px; height: 102px; background: #2a2d36;
  border: 1px solid #15161a; box-shadow: 0 4px 20px rgba(0,0,0,.35);
  display: flex; align-items: center; justify-content: center; gap: 16px; color: #fff; font-size: 27.5px;
}
.esc {
  width: 74px; height: 68px; border: 2px solid #f4f4f4; border-radius: 3px; font-size: 28px; font-weight: 500;
  display: flex; align-items: center; justify-content: center;
}
```
